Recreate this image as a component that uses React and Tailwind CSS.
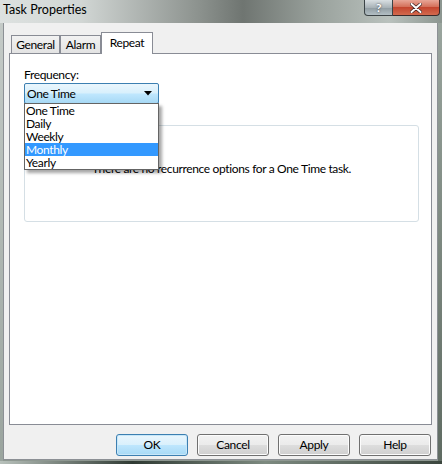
import React from 'react';

const font = { fontFamily: 'Lato, "Noto Sans", sans-serif', letterSpacing: '-0.35px' };

function TitleBar() {
  return (
    <div className="relative h-[23px] flex items-start bg-[linear-gradient(90deg,#dde1e0_0%,#d2d7d5_18%,#8c928e_45%,#6f7571_55%,#9aa29d_72%,#b9c1bd_88%,#8c9690_100%)]">
      <span className="pl-[3px] pt-[2px] text-[12.5px] leading-[16px] text-black tracking-normal">Task Properties</span>
      <div className="ml-auto mr-[2px] flex h-[16px]">
        <div className="w-[29px] h-[16px] rounded-bl-[4px] border border-t-0 border-[#3b4346] bg-[linear-gradient(180deg,#d9dfe2,#a9b3b8_50%,#8f9ba1_51%,#b3bfc4)] flex items-center justify-center text-white font-bold text-[12px] leading-[14px] [text-shadow:0_0_2px_#333]">?</div>
        <div className="w-[47px] h-[16px] rounded-br-[4px] border border-l-0 border-t-0 border-[#3b2a2a] bg-[linear-gradient(180deg,#e8a697,#d4705a_45%,#c4462f_50%,#d36a4e)] flex items-center justify-center">
          <svg width="12" height="10" viewBox="0 0 12 10">
            <path d="M1.5 1l9 8M10.5 1l-9 8" stroke="#3a2020" strokeWidth="3.4" strokeLinecap="round" />
            <path d="M1.5 1l9 8M10.5 1l-9 8" stroke="#fff" strokeWidth="2" strokeLinecap="round" />
          </svg>
        </div>
      </div>
    </div>
  );
}

function Tab({ label, active, w }) {
  if (active) {
    return (
      <div className={`${w} h-[22px] -mb-[1px] relative z-10 bg-white border border-b-0 border-[#898c95] flex items-start justify-center pt-[2px] text-[12px] leading-[15px]`}>
        {label}
      </div>
    );
  }
  return (
    <div className={`${w} h-[18px] mt-[3px] bg-[linear-gradient(180deg,#f2f2f2,#e3e3e3)] border border-b-0 border-[#898c95] flex items-start justify-center pt-[1px] text-[12px] leading-[15px]`}>
      {label}
    </div>
  );
}

function Button({ label, primary }) {
  return (
    <button
      className={`w-[72px] h-[22px] rounded-[3px] border text-[12px] leading-none text-black ${
        primary
          ? 'border-[#3c7fb1] bg-[linear-gradient(180deg,#eaf6fd,#d9f0fc_50%,#bee6fd_51%,#a7d9f5)] shadow-[inset_0_0_0_1px_#c7e7f9]'
          : 'border-[#707070] bg-[linear-gradient(180deg,#f2f2f2,#ebebeb_50%,#dddddd_51%,#cfcfcf)] shadow-[inset_0_0_0_1px_#fcfcfc]'
      }`}
    >
      {label}
    </button>
  );
}

export default function App() {
  const options = ['One Time', 'Daily', 'Weekly', 'Monthly', 'Yearly'];

  return (
    <div style={font} className="w-[442px] h-[464px] flex flex-col bg-[#8e9891] text-black overflow-hidden">
      <TitleBar />
      <div className="flex flex-1">
        {/* left frame */}
        <div className="w-[3px] bg-[linear-gradient(180deg,#c4cac7,#9aa49e)]" />
        {/* client area */}
        <div className="w-[435px] h-[437px] bg-[#f0f0f0] border-l border-b border-r border-[#8c9095] flex flex-col">
          {/* tabs */}
          <div className="flex items-end pl-[7px] mt-[9px]">
            <Tab label="General" w="w-[49px]" />
            <Tab label="Alarm" w="w-[41px]" />
            <Tab label="Repeat" w="w-[52px]" active />
          </div>
          {/* tab panel */}
          <div className="ml-[5px] w-[423px] h-[372px] bg-white border border-[#898c95] pl-[14px] pr-[12px] pt-[13px] relative">
            <div className="text-[12px] leading-[15px]">Frequency:</div>
            <div className="relative mt-[1px] w-[135px]">
              <div className="h-[21px] border border-[#3c7fb1] rounded-[2px] bg-[linear-gradient(180deg,#eaf6fd,#d9f0fc_45%,#bee6fd_55%,#a7d9f5)] flex items-center pl-[2px] pr-[6px] text-[12px]">
                <span>One Time</span>
                <svg className="ml-auto" width="8" height="5" viewBox="0 0 8 5">
                  <path d="M0 0h8L4 4.5z" fill="#000" />
                </svg>
              </div>
              {/* open dropdown list */}
              <div className="absolute left-0 top-[20px] w-[135px] bg-white border border-[#646464] z-20 shadow-[3px_3px_3px_rgba(0,0,0,0.35)]">
                {options.map((o) => (
                  <div
                    key={o}
                    className={`h-[13px] flex items-center pl-[1px] text-[12px] leading-[13px] ${
                      o === 'Monthly' ? 'bg-[#3399ff] text-white' : ''
                    }`}
                  >
                    {o}
                  </div>
                ))}
              </div>
            </div>
            {/* group box */}
            <div className="mt-[21px] w-[395px] h-[97px] border border-[#d5dfe5] rounded-[3px] flex justify-center pt-[35px] text-[12px] leading-[15px]">
              <span>There are no recurrence options for a One Time task.</span>
            </div>
          </div>
          {/* buttons */}
          <div className="flex justify-end gap-[9px] mt-[9px] pr-[6px]">
            <Button label="OK" primary />
            <Button label="Cancel" />
            <Button label="Apply" />
            <Button label="Help" />
          </div>
        </div>
        {/* right frame */}
        <div className="flex-1 bg-[linear-gradient(180deg,#9aa59e,#5f6b62)]" />
      </div>
      <div className="h-[3px] bg-[linear-gradient(90deg,#b8c1bb,#2f3a33_30%,#7d8a80_60%,#3b463e)]" />
    </div>
  );
}
